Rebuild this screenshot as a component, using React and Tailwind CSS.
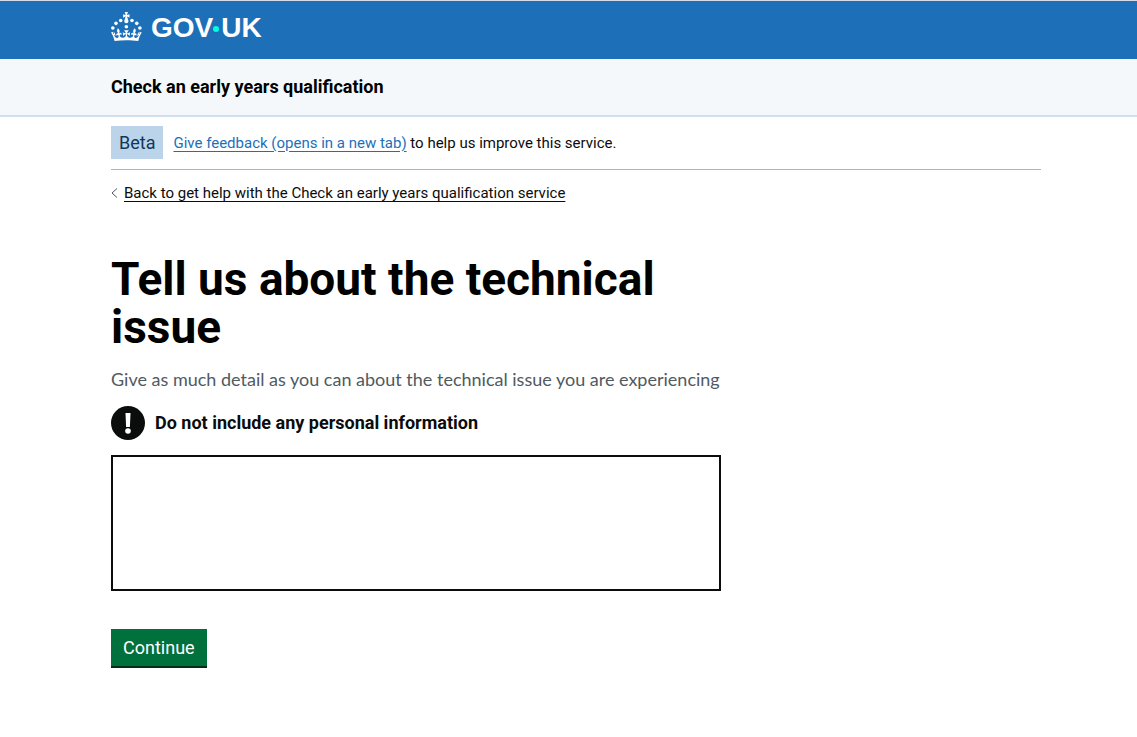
const crownDots = [
  [20, 17.6],
  [10.2, 23.5],
  [3.7, 33.2],
  [31.7, 30.6],
  [43.3, 17.6],
  [53.2, 23.5],
  [59.7, 33.2],
];

function Crown() {
  return (
    <svg viewBox="0 0 64 60" className="h-[29px] w-[31px]" fill="currentColor" aria-hidden="true">
      {crownDots.map(([cx, cy]) => (
        <circle key={cx} cx={cx} cy={cy} r="3.7" />
      ))}
      <path d="M33.1,9.8c.2-.1.3-.3.5-.5l4.6,2.4v-6.8l-4.6,1.5c-.1-.2-.3-.3-.5-.5l1.9-5.9h-6.7l1.9,5.9c-.2.1-.3.3-.5.5l-4.6-1.5v6.8l4.6-2.4c.1.2.3.3.5.5l-2.6,8c-.9,2.8,1.2,5.7,4.1,5.7h0c3,0,5.1-2.9,4.1-5.7l-2.6-8ZM37,37.9s-3.4,3.8-4.1,6.1c2.2,0,4.2-.5,6.4-2.8l-.7,8.5c-2-2.8-4.4-4.1-5.7-3.8.1,3.1.5,6.7,5.8,7.2,3.7.3,6.7-1.5,7-3.8.4-2.6-2-4.3-3.7-1.6-1.4-4.5,2.4-6.1,4.9-3.2-1.9-4.5-1.8-7.7,2.4-10.9,3,4,2.6,7.3-1.2,11.1,2.4-1.3,6.2,0,4,4.6-1.2-2.8-3.7-2.2-4.2.2-.3,1.7.7,3.7,3,4.2,1.9.3,4.7-.9,7-5.9-1.3,0-2.4.7-3.9,1.7l2.4-8c.6,2.3,1.4,3.7,2.2,4.5.6-1.6.5-2.8,0-5.3l5,1.8c-2.6,3.6-5.2,8.7-7.3,17.5-7.4-1.1-15.7-1.7-24.5-1.7h0c-8.8,0-17.1.6-24.5,1.7-2.1-8.9-4.7-13.9-7.3-17.5l5-1.8c-.5,2.5-.6,3.7,0,5.3.8-.8,1.6-2.3,2.2-4.5l2.4,8c-1.5-1-2.6-1.7-3.9-1.7,2.3,5,5.2,6.2,7,5.9,2.3-.4,3.3-2.4,3-4.2-.5-2.4-3-3.1-4.2-.2-2.2-4.6,1.6-6,4-4.6-3.7-3.7-4.2-7.1-1.2-11.1,4.2,3.2,4.3,6.4,2.4,10.9,2.5-2.8,6.3-1.3,4.9,3.2-1.8-2.7-4.1-1-3.7,1.6.3,2.3,3.3,4.1,7,3.8,5.4-.5,5.7-4.2,5.8-7.2-1.3-.2-3.7,1-5.7,3.8l-.7-8.5c2.2,2.3,4.2,2.7,6.4,2.8-.7-2.3-4.1-6.1-4.1-6.1h10.6Z" />
    </svg>
  );
}

function Header() {
  return (
    <header>
      <div className="border-t border-[#d5dbe8] bg-[#1d70b8] pr-24 pl-[111px]">
        <a href="#" className="flex h-[58px] items-center gap-[9px] pb-2 text-white">
          <Crown />
          <span className="flex items-center pt-1 font-['Liberation_Sans',sans-serif] text-[28px] leading-8 font-bold">
            GOV
            <span className="mt-[2px] mr-[2px] size-[6px] rounded-full bg-[#00ffe0]" />
            UK
          </span>
        </a>
      </div>
      <div className="border-b-2 border-[#cfdfed] bg-[#f4f8fb] py-4 pr-24 pl-[111px]">
        <a href="#" className="block text-[18px] leading-6 font-bold text-black">
          Check an early years qualification
        </a>
      </div>
    </header>
  );
}

function PhaseBanner() {
  return (
    <div className="flex items-center gap-[10px] border-b border-[#b1b4b6] pt-[9px] pb-[10px]">
      <strong className="bg-[#bbd4ea] px-2 py-1 text-[18px] leading-[25px] font-normal text-[#0f385c]">
        Beta
      </strong>
      <span className="text-[15px] leading-5">
        <a href="#" className="text-[#1d70b8] underline underline-offset-3">
          Give feedback (opens in a new tab)
        </a>{" "}
        to help us improve this service.
      </span>
    </div>
  );
}

export default function App() {
  return (
    <div className="min-h-screen bg-white font-[Roboto,sans-serif] text-[#0b0c0c]">
      <Header />
      <div className="pr-24 pl-[111px]">
        <PhaseBanner />
        <a href="#" className="mt-[13px] inline-flex items-center gap-[6px] text-[15px] leading-5">
          <svg viewBox="0 0 7 10" className="h-[10px] w-[7px]" fill="none" stroke="#505a5f" aria-hidden="true">
            <path d="M6 0.500 1 5l5 4.500" />
          </svg>
          <span className="underline underline-offset-3">
            Back to get help with the Check an early years qualification service
          </span>
        </a>
        <main className="mt-[50px] max-w-[610px]">
          <form onSubmit={(e) => e.preventDefault()}>
            <h1 className="text-[46px] leading-[48px] font-bold text-black">
              <label htmlFor="details">Tell us about the technical issue</label>
            </h1>
            <p
              id="details-hint"
              className="mt-4 font-[Lato,sans-serif] text-[18px] leading-6 text-[#505a5f] sm:whitespace-nowrap"
            >
              Give as much detail as you can about the technical issue you are experiencing
            </p>
            <div className="mt-[15px] flex items-center gap-[10px]">
              <svg viewBox="0 0 34 34" className="size-[34px] shrink-0" aria-hidden="true">
                <circle cx="17" cy="17" r="17" fill="#0b0c0c" />
                <path d="M14.500 7h5l-.6 14h-3.800z" fill="#fff" />
                <circle cx="17" cy="25" r="2.800" fill="#fff" />
              </svg>
              <strong className="text-[18px] leading-6 font-bold">
                Do not include any personal information
              </strong>
            </div>
            <textarea
              id="details"
              name="details"
              rows={5}
              aria-describedby="details-hint"
              className="mt-[15px] block h-[136px] w-full resize-none border-2 border-[#0b0c0c] p-[5px] text-[18px] leading-6 outline-none"
            />
            <button
              type="submit"
              className="mt-[38px] border-b-2 border-[#002d18] bg-[#00703c] px-3 pt-[7px] pb-[6px] text-[18px] leading-6 text-white"
            >
              Continue
            </button>
          </form>
        </main>
      </div>
    </div>
  );
}
